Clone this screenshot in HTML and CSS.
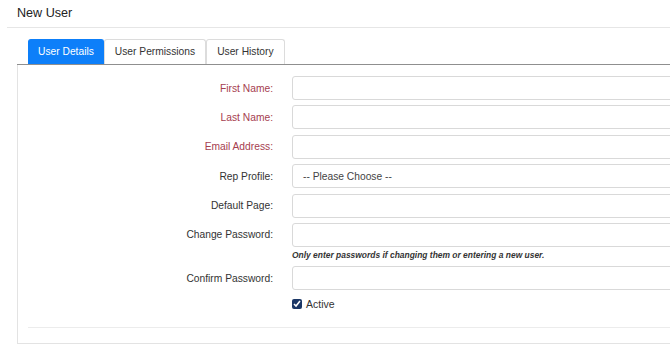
FILE: index.html
```html
<!DOCTYPE html>
<html lang="en">
<head>
    <meta charset="UTF-8">
    <meta name="viewport" content="width=device-width, initial-scale=1.0">
    <title>New User</title>
    <link rel="stylesheet" href="styles.css">
</head>
<body>
    <div class="page-header">New User</div>

    <div class="content">
        <div class="tabs">
            <div class="tab active">User Details</div>
            <div class="tab">User Permissions</div>
            <div class="tab">User History</div>
        </div>

        <div class="panel">
            <div class="form-row">
                <label class="required">First Name:</label>
                <input type="text" class="field">
            </div>
            <div class="form-row">
                <label class="required">Last Name:</label>
                <input type="text" class="field">
            </div>
            <div class="form-row">
                <label class="required">Email Address:</label>
                <input type="text" class="field">
            </div>
            <div class="form-row">
                <label>Rep Profile:</label>
                <div class="field select">-- Please Choose --</div>
            </div>
            <div class="form-row">
                <label>Default Page:</label>
                <input type="text" class="field">
            </div>
            <div class="form-row">
                <label>Change Password:</label>
                <input type="password" class="field">
            </div>
            <div class="form-row help-row">
                <span></span>
                <small class="help">Only enter passwords if changing them or entering a new user.</small>
            </div>
            <div class="form-row">
                <label>Confirm Password:</label>
                <input type="password" class="field">
            </div>
            <div class="form-row check-row">
                <span></span>
                <label class="check"><input type="checkbox" checked> Active</label>
            </div>
            <hr class="divider">
        </div>
    </div>
</body>
</html>
```

FILE: styles.css
```css
html, body {
    overflow: hidden;
}
body {
    margin: 0;
    font-family: 'Liberation Sans', Arial, sans-serif;
    font-size: 10.25px;
    color: #333;
    background: #fff;
}
.page-header {
    height: 27px;
    line-height: 27px;
    margin-left: 7px;
    padding-left: 10px;
    font-size: 12.6px;
    color: #222;
    border-bottom: 1px solid #e6e6e6;
}
.content {
    margin-top: 11px;
    margin-left: 17px;
    width: 820px;
}
.tabs {
    display: flex;
    padding-left: 11px;
    border-bottom: 1px solid #8f8f8f;
}
.tab {
    height: 24px;
    line-height: 24px;
    padding: 0 10px;
    border: 1px solid #dcdcdc;
    border-bottom: none;
    border-top-left-radius: 3px;
    border-top-right-radius: 3px;
    color: #333;
}
.tab.active {
    background: #0d7ff9;
    border-color: #0d7ff9;
    color: #fff;
    padding: 0 9px;
}
.panel {
    border-left: 1px solid #e3e3e3;
    border-bottom: 1px solid #e3e3e3;
    padding: 11px 0 15px 10px;
}
.form-row {
    display: grid;
    grid-template-columns: 245px 1fr;
    column-gap: 19px;
    align-items: center;
    margin-bottom: 5.4px;
}
.form-row label {
    text-align: right;
}
.form-row label.required {
    color: #a6404f;
}
.field {
    box-sizing: border-box;
    height: 24px;
    border: 1px solid #d9d9d9;
    border-radius: 3px;
    background: #fff;
    font: inherit;
    padding: 0 10px;
}
.select {
    display: flex;
    align-items: center;
    color: #444;
}
.help-row {
    margin-top: -3.4px;
    margin-bottom: 4.5px;
}
.help {
    font-size: 8.45px;
    font-weight: bold;
    font-style: italic;
    line-height: 13px;
    color: #333;
}
.check-row {
    padding-top: 2px;
}
.check-row label.check {
    text-align: left;
    display: flex;
    align-items: center;
    gap: 4px;
    font-size: 10.5px;
}
.check input {
    width: 10px;
    height: 10px;
    margin: 0;
    accent-color: #1b3766;
}
.divider {
    border: none;
    border-top: 1px solid #ececec;
    margin: 17.5px 0 0 0;
}
```
